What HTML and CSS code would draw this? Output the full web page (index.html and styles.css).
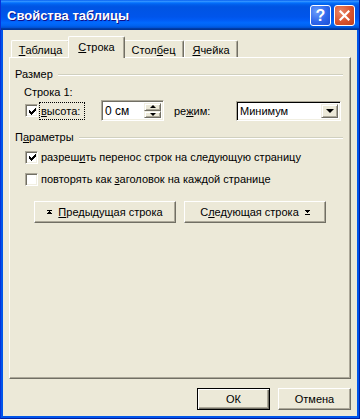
FILE: index.html
```html
<!DOCTYPE html>
<html lang="ru">
<head>
  <meta charset="UTF-8">
  <title>Свойства таблицы</title>
  <link rel="stylesheet" href="styles.css">
</head>
<body>

  <div class="window">
    <!-- Title bar -->
    <div class="titlebar">
      <span class="title">Свойства таблицы</span>
      <div class="caption-btns">
        <span class="cap-btn help">?</span>
        <span class="cap-btn close">
          <svg width="11" height="11" viewBox="0 0 11 11"><path d="M1.5 1.5 L9.5 9.5 M9.5 1.5 L1.5 9.5" stroke="#fff" stroke-width="2.2" stroke-linecap="square"/></svg>
        </span>
      </div>
    </div>

    <div class="client">
      <!-- Tabs -->
      <div class="tabs">
        <div class="tab tab-1"><u>Т</u>аблица</div>
        <div class="tab tab-2 active"><u>С</u>трока</div>
        <div class="tab tab-3">Стол<u>б</u>ец</div>
        <div class="tab tab-4"><u>Я</u>чейка</div>
      </div>

      <div class="panel">
        <!-- Size group -->
        <div class="group-head"><span>Размер</span><span class="rule"></span></div>
        <div class="row-label">Строка 1:</div>
        <div class="height-row">
          <span class="box checked">
            <svg width="7" height="7" viewBox="0 0 7 7" shape-rendering="crispEdges"><path d="M6 0h1v3h-1v1h-1v1h-1v1h-1v1h-1v-1h-1v-1h-1v-3h1v1h1v1h1v-1h1v-1h1v-1h1z" fill="#000"/></svg>
          </span>
          <span class="focus"><u>в</u>ысота:</span>
          <div class="spin">
            <span class="field-text">0 см</span>
            <span class="spin-btns">
              <span class="mini-btn"><span class="tri-up"></span></span>
              <span class="mini-btn"><span class="tri-down"></span></span>
            </span>
          </div>
          <span class="mode-label">ре<u>ж</u>им:</span>
          <div class="combo">
            <span class="field-text">Минимум</span>
            <span class="combo-btn"><span class="tri-down big"></span></span>
          </div>
        </div>

        <!-- Options group -->
        <div class="group-head params"><span>П<u>а</u>раметры</span><span class="rule"></span></div>
        <div class="check-row first">
          <span class="box checked">
            <svg width="7" height="7" viewBox="0 0 7 7" shape-rendering="crispEdges"><path d="M6 0h1v3h-1v1h-1v1h-1v1h-1v1h-1v-1h-1v-1h-1v-3h1v1h1v1h1v-1h1v-1h1v-1h1z" fill="#000"/></svg>
          </span>
          <span class="check-text">разреш<u>и</u>ть перенос строк на следующую страницу</span>
        </div>
        <div class="check-row second">
          <span class="box"></span>
          <span class="check-text">повторять как <u>з</u>аголовок на каждой странице</span>
        </div>

        <!-- Row navigation -->
        <div class="nav-row">
          <button class="btn nav-btn">
            <svg width="5" height="5" viewBox="0 0 5 5" shape-rendering="crispEdges"><path d="M0 0h5v1h-5z M2 1h1v1h1v1h1v1h-5v-1h1v-1h1z" fill="#000"/></svg>
            <span><u>П</u>редыдущая строка</span>
          </button>
          <button class="btn nav-btn">
            <span>С<u>л</u>едующая строка</span>
            <svg width="5" height="5" viewBox="0 0 5 5" shape-rendering="crispEdges"><path d="M0 0h5v1h-1v1h-1v1h-1v-1h-1v-1h-1z M0 4h5v1h-5z" fill="#000"/></svg>
          </button>
        </div>
      </div>

      <!-- Dialog buttons -->
      <div class="footer">
        <button class="btn default">ОК</button>
        <button class="btn">Отмена</button>
      </div>
    </div>
  </div>

</body>
</html>
```

FILE: styles.css
```css
/* Base */
* {
  box-sizing: border-box;
}

body {
  margin: 0;
  font-family: "Liberation Sans", Arial, sans-serif;
  font-size: 11px;
  color: #000;
  background: #fff;
}

u {
  text-decoration: underline;
  text-underline-offset: 1px;
}

/* Window frame */
.window {
  width: 360px;
  height: 419px;
  display: flex;
  flex-direction: column;
  background: #0055ea;
  border-left: 1px solid #0831d9;
  border-right: 1px solid #001ea0;
  border-bottom: 1px solid #001ea0;
  overflow: hidden;
}

/* Title bar */
.titlebar {
  height: 30px;
  flex: none;
  display: flex;
  align-items: center;
  justify-content: space-between;
  padding: 0 4px 0 6px;
  background: linear-gradient(to bottom, #0058ee 0%, #3593ff 4%, #288eff 6%, #127dff 8%, #036ffc 10%, #0262ee 14%, #0057e5 20%, #0054e3 24%, #0055eb 56%, #005bf5 66%, #026afe 76%, #0062ef 86%, #0052d6 92%, #0040ab 94%, #003092 100%);
}

.title {
  color: #fff;
  font-weight: bold;
  font-size: 13px;
  text-shadow: 1px 1px #0f1089;
  padding-top: 1px;
}

.caption-btns {
  display: flex;
  gap: 3px;
  padding-top: 1px;
}

.cap-btn {
  width: 21px;
  height: 21px;
  border: 1px solid #fff;
  border-radius: 3px;
  display: flex;
  align-items: center;
  justify-content: center;
  color: #fff;
  font-weight: bold;
  font-size: 16px;
}

.help {
  background: radial-gradient(circle at 30% 30%, #6a9cfa 0%, #2f67ec 55%, #1c4fd4 100%);
}

.close {
  background: radial-gradient(circle at 30% 30%, #e98668 0%, #d9532e 55%, #c13f1b 100%);
}

/* Client area */
.client {
  flex: 1;
  margin: 0 2px 2px;
  background: #ece9d8;
  padding: 6px;
  display: flex;
  flex-direction: column;
}

/* Tabs */
.tabs {
  display: flex;
  align-items: flex-end;
  height: 21px;
  padding-left: 2px;
  position: relative;
  z-index: 1;
}

.tab {
  height: 17px;
  display: flex;
  align-items: center;
  justify-content: center;
  background: #ece9d8;
  border-top: 1px solid #fff;
  border-left: 1px solid #fff;
  border-right: 1px solid #716f64;
  box-shadow: inset -1px 0 #aca899;
  border-radius: 2px 2px 0 0;
  padding-top: 1px;
}

.tab-1 { width: 59px; }
.tab-3 { width: 61px; }
.tab-4 { width: 54px; }

.tab.active {
  width: 57px;
  height: 22px;
  margin: 0 -2px -1px;
  position: relative;
  z-index: 2;
  padding-bottom: 2px;
}

/* Tab panel */
.panel {
  height: 322px;
  flex: none;
  border: 1px solid;
  border-color: #fff #716f64 #716f64 #fff;
  box-shadow: inset -1px -1px #aca899;
  padding: 9px 7px 0 5px;
}

.group-head {
  display: flex;
  align-items: center;
  height: 14px;
  gap: 5px;
}

.group-head .rule {
  flex: 1;
  height: 2px;
  border-top: 1px solid #d0d0bf;
  border-bottom: 1px solid #fff;
  margin-top: 1px;
}

.group-head.params {
  margin-top: 9px;
}

.row-label {
  height: 14px;
  margin-top: 4px;
  margin-left: 9px;
  line-height: 14px;
}

/* Checkboxes */
.box {
  width: 13px;
  height: 13px;
  flex: none;
  background: #fff;
  border: 1px solid;
  border-color: #aca899 #fff #fff #aca899;
  box-shadow: inset 1px 1px #716f64, inset -1px -1px #f1efe2;
  display: flex;
  align-items: center;
  justify-content: center;
  padding: 1px 0 0 1px;
}

.height-row {
  display: flex;
  align-items: center;
  height: 21px;
  margin-top: 1px;
  margin-left: 10px;
}

.focus {
  margin-left: 1px;
  padding: 2px 1px;
  width: 46px;
  border: 1px dotted #000;
}

/* Sunken fields */
.spin,
.combo {
  display: flex;
  align-items: stretch;
  background: #fff;
  border: 1px solid;
  border-color: #aca899 #fff #fff #aca899;
  box-shadow: inset 1px 1px #716f64, inset -1px -1px #f1efe2;
  padding: 2px;
}

.spin {
  width: 63px;
  height: 21px;
  margin-left: 16px;
}

.combo {
  width: 105px;
  height: 20px;
  box-shadow: inset 1px 1px #000, inset -1px -1px #f1efe2;
}

.field-text {
  flex: 1;
  display: flex;
  align-items: center;
  padding-left: 1px;
}

.spin .field-text {
  font-size: 12px;
}

.spin-btns {
  width: 17px;
  display: flex;
  flex-direction: column;
}

.mini-btn,
.combo-btn {
  flex: 1;
  background: #ece9d8;
  border: 1px solid;
  border-color: #f1efe2 #716f64 #716f64 #f1efe2;
  box-shadow: inset 1px 1px #fff, inset -1px -1px #aca899;
  display: flex;
  align-items: center;
  justify-content: center;
}

.combo-btn {
  flex: none;
  width: 17px;
}

.tri-up,
.tri-down {
  width: 0;
  height: 0;
  border-left: 3px solid transparent;
  border-right: 3px solid transparent;
}

.tri-up {
  border-bottom: 3px solid #000;
}

.tri-down {
  border-top: 3px solid #000;
}

.tri-down.big {
  border-left-width: 4px;
  border-right-width: 4px;
  border-top-width: 4px;
}

.mode-label {
  margin-left: 10px;
  width: 62px;
}

/* Option rows */
.check-row {
  display: flex;
  align-items: center;
  height: 14px;
  margin-left: 10px;
  gap: 3px;
}

.check-row.first {
  margin-top: 6px;
}

.check-row.second {
  margin-top: 8px;
}

/* Buttons */
.btn {
  font-family: inherit;
  font-size: 11px;
  color: #000;
  background: #ece9d8;
  border: 1px solid;
  border-color: #fff #716f64 #716f64 #fff;
  box-shadow: inset -1px -1px #aca899;
  border-radius: 0;
  padding: 0;
  display: flex;
  align-items: center;
  justify-content: center;
  gap: 6px;
}

.nav-row {
  display: flex;
  gap: 8px;
  margin-top: 15px;
  margin-left: 19px;
}

.nav-btn {
  width: 142px;
  height: 22px;
}

.footer {
  display: flex;
  justify-content: flex-end;
  gap: 8px;
  margin-top: 9px;
}

.footer .btn {
  width: 73px;
  height: 22px;
}

.btn.default {
  border: 1px solid #000;
  box-shadow: inset 1px 1px #fff, inset -1px -1px #716f64, inset -2px -2px #aca899;
}
```
